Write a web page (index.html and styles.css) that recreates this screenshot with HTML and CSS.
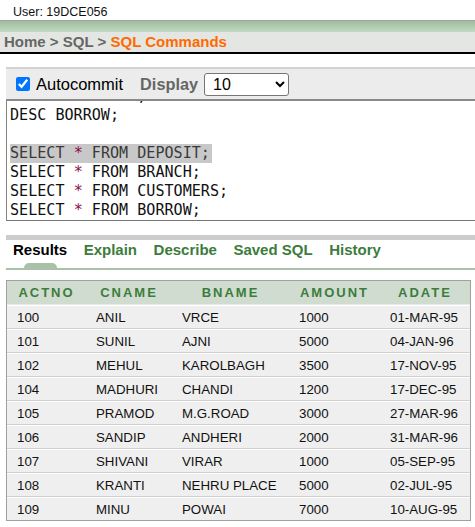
FILE: index.html
```html
<!DOCTYPE html>
<html>
<head>
<meta charset="utf-8">
<link rel="stylesheet" href="styles.css">
</head>
<body>
<div class="user">User: 19DCE056</div>
<div class="band"></div>
<div class="crumbs"><span class="crumb">Home</span> &gt; <span class="crumb">SQL</span> &gt; <span class="current">SQL Commands</span></div>

<div class="toolbar">
  <input type="checkbox" class="check" checked>
  <span class="label">Autocommit</span>
  <span class="display">Display</span>
  <select class="rows">
    <option>10</option>
    <option>25</option>
    <option>50</option>
  </select>
</div>

<div class="editor">
<div class="code"><div class="line">DESC CUSTOMERS;</div><div class="line">DESC BORROW;</div><div class="line">&nbsp;</div><div class="line"><span class="sel">SELECT <span class="op">*</span> FROM DEPOSIT;</span></div><div class="line">SELECT <span class="op">*</span> FROM BRANCH;</div><div class="line">SELECT <span class="op">*</span> FROM CUSTOMERS;</div><div class="line">SELECT <span class="op">*</span> FROM BORROW;</div></div>
</div>

<div class="tabbar"></div>
<div class="tabs">
  <div class="tab active"><span class="tabtext">Results</span><span class="bump"></span></div>
  <div class="tab"><span class="tabtext">Explain</span></div>
  <div class="tab"><span class="tabtext">Describe</span></div>
  <div class="tab"><span class="tabtext">Saved SQL</span></div>
  <div class="tab"><span class="tabtext">History</span></div>
</div>

<table class="results">
  <colgroup>
    <col class="c1"><col class="c2"><col class="c3"><col class="c4"><col class="c5">
  </colgroup>
  <thead>
    <tr><th>ACTNO</th><th>CNAME</th><th>BNAME</th><th>AMOUNT</th><th>ADATE</th></tr>
  </thead>
  <tbody>
    <tr><td>100</td><td>ANIL</td><td>VRCE</td><td>1000</td><td>01-MAR-95</td></tr>
    <tr><td>101</td><td>SUNIL</td><td>AJNI</td><td>5000</td><td>04-JAN-96</td></tr>
    <tr><td>102</td><td>MEHUL</td><td>KAROLBAGH</td><td>3500</td><td>17-NOV-95</td></tr>
    <tr><td>104</td><td>MADHURI</td><td>CHANDI</td><td>1200</td><td>17-DEC-95</td></tr>
    <tr><td>105</td><td>PRAMOD</td><td>M.G.ROAD</td><td>3000</td><td>27-MAR-96</td></tr>
    <tr><td>106</td><td>SANDIP</td><td>ANDHERI</td><td>2000</td><td>31-MAR-96</td></tr>
    <tr><td>107</td><td>SHIVANI</td><td>VIRAR</td><td>1000</td><td>05-SEP-95</td></tr>
    <tr><td>108</td><td>KRANTI</td><td>NEHRU PLACE</td><td>5000</td><td>02-JUL-95</td></tr>
    <tr><td>109</td><td>MINU</td><td>POWAI</td><td>7000</td><td>10-AUG-95</td></tr>
  </tbody>
</table>
</body>
</html>
```

FILE: styles.css
```css
html, body {
  margin: 0;
  padding: 0;
  background: #ffffff;
  font-family: "Liberation Sans", Arial, sans-serif;
  color: #000;
  overflow: hidden;
}

.user {
  box-sizing: border-box;
  height: 20px;
  padding: 5px 0 0 13px;
  font-size: 12.5px;
  line-height: 15px;
  color: #111;
}

.band {
  height: 11px;
  border-top: 1px solid #a2a2a2;
  background: linear-gradient(#9fbd9f, #c2d9c2);
}

.crumbs {
  height: 20px;
  line-height: 20px;
  padding-left: 4px;
  background: #e4e6e4;
  border-bottom: 2px solid #000;
  font-size: 15px;
  font-weight: bold;
  color: #666;
}

.current {
  color: #ff6a00;
}

.toolbar {
  margin: 13px 0 0 6px;
  height: 30px;
  border-top: 2px solid #d2d2d2;
  border-bottom: 2px solid #8a8a8a;
  background: #ececec;
  display: flex;
  align-items: center;
  padding-left: 10px;
}

.check {
  width: 14px;
  height: 14px;
  margin: 0 6px 0 0;
  accent-color: #0075ff;
}

.label {
  font-size: 16.5px;
  color: #000;
}

.display {
  margin-left: 17px;
  font-size: 16.3px;
  font-weight: bold;
  color: #666;
}

.rows {
  margin-left: 6px;
  width: 85px;
  height: 23px;
  font-family: "Liberation Sans", Arial, sans-serif;
  font-size: 16px;
  color: #000;
  background: #fff;
  border: 1px solid #767676;
  border-radius: 3px;
  padding-left: 4px;
}

.editor {
  margin-left: 6px;
  height: 119px;
  overflow: hidden;
  border-left: 1px solid #858585;
  border-bottom: 1px solid #777;
  background: #fff;
}

.code {
  margin-top: -14px;
  padding-left: 3px;
  font-family: "DejaVu Sans Mono", monospace;
  font-size: 15.1px;
  line-height: 19px;
  color: #111;
  white-space: pre;
}

.line {
  height: 19px;
}

.sel {
  display: inline-block;
  background: #c8c8c8;
  color: #3a3a3a;
  padding-right: 2px;
}

.op {
  color: #8a1050;
}

.tabbar {
  margin: 14px 0 0 6px;
  height: 5px;
  background: #cccccc;
}

.tabs {
  margin-left: 6px;
  padding-left: 7px;
  display: flex;
  gap: 16.5px;
  border-bottom: 2px solid #a9c1a9;
  height: 28px;
}

.tab {
  display: flex;
  flex-direction: column;
  align-items: center;
}

.tabtext {
  font-size: 15px;
  font-weight: bold;
  line-height: 20px;
  color: #3c7c3c;
}

.active .tabtext {
  color: #000;
}

.bump {
  margin-top: 3px;
  width: 33px;
  height: 5px;
  background: #a9c1a9;
  border-radius: 5px 5px 0 0;
}

.results {
  margin: 10px 0 0 6px;
  width: 465px;
  border-collapse: separate;
  border-spacing: 0;
  table-layout: fixed;
  border: 1px solid #a0a0a0;
}

.c1 { width: 79px; }
.c2 { width: 86px; }
.c3 { width: 117px; }
.c4 { width: 91px; }
.c5 { width: 90px; }

.results th {
  height: 23px;
  padding: 0;
  background: #d0dcd0;
  color: #3c7c3c;
  font-size: 13px;
  font-weight: bold;
  letter-spacing: 2px;
  text-align: center;
  border-bottom: 1px solid #e8ece8;
}

.results td {
  height: 22px;
  padding: 0 0 0 10px;
  background: #efefef;
  font-size: 13.3px;
  color: #111;
  text-align: left;
  white-space: nowrap;
  border-top: 1px solid #ffffff;
  border-bottom: 1px solid #d0d0d0;
}

.results tbody tr:last-child td {
  border-bottom: none;
}
```
